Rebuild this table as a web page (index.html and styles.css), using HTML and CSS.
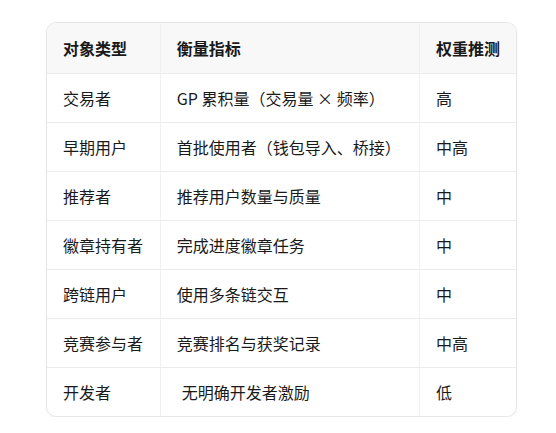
FILE: index.html
```html
<!DOCTYPE html>
<html lang="zh-CN">
<head>
<meta charset="utf-8">
<link rel="stylesheet" href="styles.css">
</head>
<body>
<div class="wrap">
  <table class="tbl">
    <thead>
      <tr><th class="c1">对象类型</th><th class="c2">衡量指标</th><th class="c3">权重推测</th></tr>
    </thead>
    <tbody>
      <tr><td>交易者</td><td>GP 累积量（交易量 × 频率）</td><td>高</td></tr>
      <tr><td>早期用户</td><td>首批使用者（钱包导入、桥接）</td><td>中高</td></tr>
      <tr><td>推荐者</td><td>推荐用户数量与质量</td><td>中</td></tr>
      <tr><td>徽章持有者</td><td>完成进度徽章任务</td><td>中</td></tr>
      <tr><td>跨链用户</td><td>使用多条链交互</td><td>中</td></tr>
      <tr><td>竞赛参与者</td><td>竞赛排名与获奖记录</td><td>中高</td></tr>
      <tr><td>开发者</td><td><span class="indent">无明确开发者激励</span></td><td>低</td></tr>
    </tbody>
  </table>
</div>
</body>
</html>
```

FILE: styles.css
```css
* { box-sizing: border-box; }
html, body { margin: 0; padding: 0; background: #ffffff; }
body {
  font-family: "Noto Sans CJK SC", "Noto Sans", sans-serif;
  color: #1a1a1a;
  font-size: 16px;
}
.wrap {
  padding: 22px 0 0 46px;
}
.tbl {
  width: 471px;
  border-collapse: separate;
  border-spacing: 0;
  border: 1px solid #e6e6e6;
  border-radius: 10px;
  overflow: hidden;
  box-shadow: 0 1px 2px rgba(0,0,0,0.04);
}
.tbl th, .tbl td {
  text-align: left;
  padding: 0 16px;
  height: 49px;
  line-height: 24px;
  border-right: 1px solid #f0f0f0;
  border-top: 1px solid #ececec;
  white-space: nowrap;
}
.tbl th:last-child, .tbl td:last-child { border-right: none; }
.tbl th {
  background: #f8f8f8;
  font-weight: 700;
  border-top: none;
  height: 50px;
}
.tbl .c1 { width: 114px; }
.tbl .c2 { width: 260px; }
.tbl td { font-weight: 400; }
.indent { padding-left: 5px; }
```
